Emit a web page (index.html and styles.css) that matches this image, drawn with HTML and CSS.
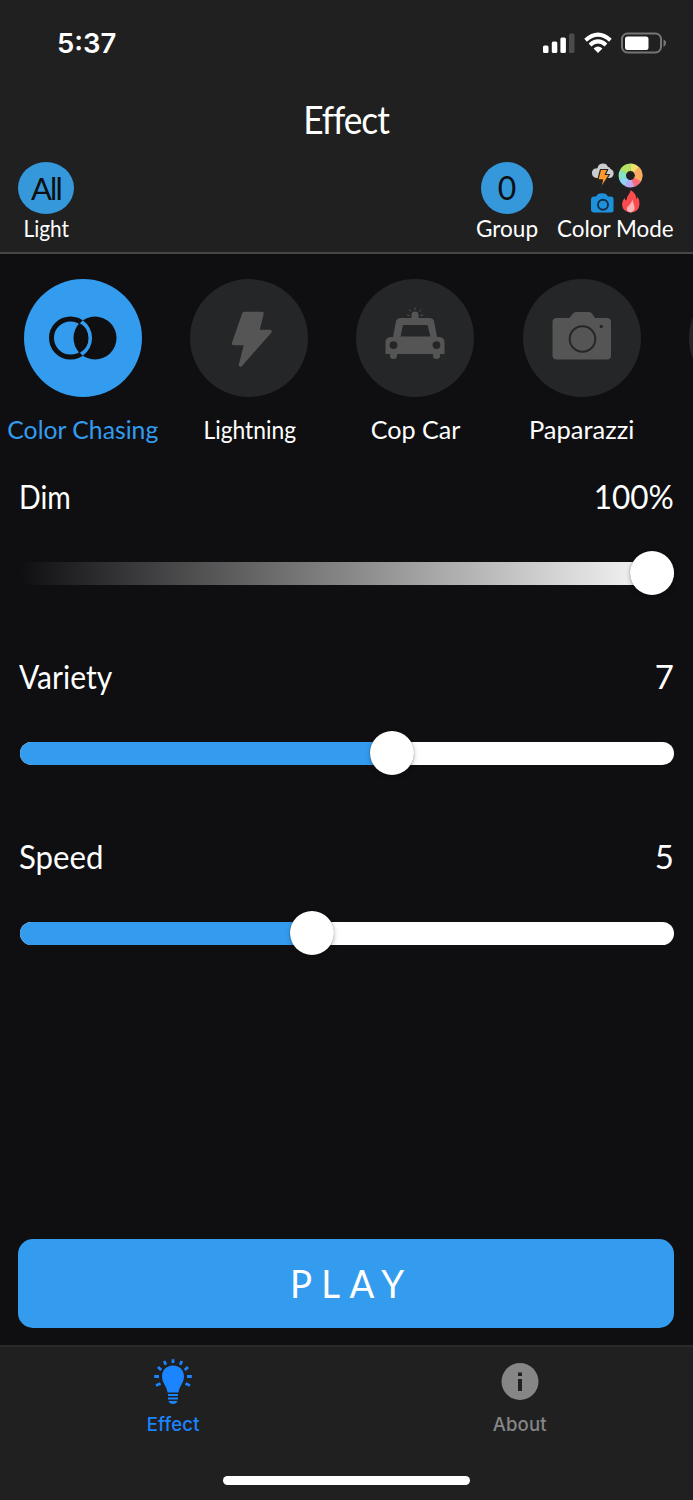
FILE: index.html
```
<!DOCTYPE html>
<html lang="en">
<head>
<meta charset="utf-8">
<title>Effect</title>
<link rel="stylesheet" href="styles.css">
</head>
<body>
<div class="app">
  <header class="header">
    <div class="status">
      <span class="time">5:37</span>
      <svg class="status-icons" width="124" height="24" viewBox="0 0 124 24">
        <g fill="#fff">
          <rect x="1" y="14.500" width="5.500" height="7.500" rx="1.500"/>
          <rect x="9.800" y="10.500" width="5.500" height="11.500" rx="1.500"/>
          <rect x="18.400" y="6.500" width="5.500" height="15.500" rx="1.500"/>
          <rect x="27" y="2.500" width="5.500" height="19.500" rx="1.500" fill="#4b4b4c"/>
          <path d="M56 22 L51.600 17.500 Q56 13.600 60.400 17.500 Z"/>
        </g>
        <g fill="none" stroke="#fff" stroke-width="4">
          <path d="M43.600 9.200 Q56 -2 68.400 9.200"/>
          <path d="M48 14 Q56 6.800 64 14"/>
        </g>
        <rect x="80" y="2.500" width="39" height="19" rx="5.500" fill="none" stroke="#757576" stroke-width="2"/>
        <rect x="83" y="5.500" width="23.500" height="13.500" rx="2.500" fill="#fff"/>
        <path d="M121.500 8.500 Q124.800 10 124 12.500 Q123.800 14.500 121.500 16 Z" fill="#757576"/>
      </svg>
    </div>
    <h1 class="title">Effect</h1>
    <div class="tools">
      <div class="tool tool-light">
        <span class="badge badge-wide">All</span>
        <span class="tool-label lb-light">Light</span>
      </div>
      <div class="tool tool-group">
        <span class="badge">0</span>
        <span class="tool-label lb-group">Group</span>
      </div>
      <div class="tool tool-mode">
        <svg class="mode-icon" width="54" height="52" viewBox="0 0 54 52">
          <path d="M6 16 A5 5 0 0 1 5 6.500 Q7 6.500 7.500 6 A5.500 5.500 0 0 1 18 5 Q20 5 20.500 7 A4.700 4.700 0 0 1 20 16 Z" fill="#cbccd0"/>
          <path d="M10.500 7.500 L17.800 7.500 L15.200 12.500 L19.500 12.500 L10.800 26 L12.500 17.800 L7.800 17.800 Z" fill="#fd9a2b" stroke="#2a2420" stroke-width="1.200" stroke-linejoin="round"/>
          <g fill="none" stroke-width="7.400">
            <circle cx="40.500" cy="13.500" r="8.200" stroke="#f5dd67" pathLength="8" stroke-dasharray="1.050 6.950"/>
            <circle cx="40.500" cy="13.500" r="8.200" stroke="#fb965f" pathLength="8" stroke-dasharray="1.050 6.950" stroke-dashoffset="1"/>
            <circle cx="40.500" cy="13.500" r="8.200" stroke="#fb6b78" pathLength="8" stroke-dasharray="1.050 6.950" stroke-dashoffset="-.6"/>
            <circle cx="40.500" cy="13.500" r="8.200" stroke="#c2a7f4" pathLength="8" stroke-dasharray="1.050 6.950" stroke-dashoffset="-1.600"/>
            <circle cx="40.500" cy="13.500" r="8.200" stroke="#8ed5f5" pathLength="8" stroke-dasharray="1.050 6.950" stroke-dashoffset="-2.600"/>
            <circle cx="40.500" cy="13.500" r="8.200" stroke="#85e4c1" pathLength="8" stroke-dasharray="1.050 6.950" stroke-dashoffset="-3.600"/>
            <circle cx="40.500" cy="13.500" r="8.200" stroke="#b3e365" pathLength="8" stroke-dasharray="1.450 6.550" stroke-dashoffset="-4.600"/>
            <circle cx="40.500" cy="13.500" r="8.200" stroke="#ece36c" pathLength="8" stroke-dasharray="1.050 6.950" stroke-dashoffset="-6"/>
            <circle cx="40.500" cy="13.500" r="8.200" stroke="#fbac61" pathLength="8" stroke-dasharray="1.600 6.400" stroke-dashoffset="-7"/>
          </g>
          <path d="M4.500 34.500 H6 L8 32 Q12 30.500 16 32 L18 34.500 H21 Q23.500 34.500 23.500 37 V48 Q23.500 50.500 21 50.500 H4 Q1 50.500 1 47.500 V37.500 Q1 34.500 4.500 34.500Z" fill="#1e91dc"/>
          <circle cx="13" cy="42.800" r="5" fill="none" stroke="#132c40" stroke-width="1.900"/>
          <path d="M40.500 28 Q46 31 46.500 37 Q47.500 36 47.500 34.500 Q50 38.500 49.500 42 Q49 50 41 50.500 Q32.500 50 32 42.500 Q32 39 34.500 36 Q35 38 36.500 38.500 Q37 34 39 32 Q40.500 30 40.500 28Z" fill="#fa4b4f"/>
          <path d="M42.500 37.500 Q43 40.500 44 43 Q46 48.500 41 50.500 Q36 50 37 45.500 Q38 44 39 43.500 Q41.500 41 42.500 37.500Z" fill="#ffb4b5"/>
        </svg>
        <span class="tool-label lb-mode">Color Mode</span>
      </div>
    </div>
  </header>

  <main class="main">
    <nav class="effects">
      <div class="effect active">
        <span class="disc"><svg width="118" height="118" viewBox="0 0 118 118">
          <circle cx="71" cy="59" r="21.500" fill="#0f0f11"/>
          <circle cx="46.500" cy="59" r="19" fill="none" stroke="#0f0f11" stroke-width="5"/>
          <path d="M58.750 41.300 A21.500 21.500 0 0 1 58.750 76.700 L55.900 73.800 A17 17 0 0 0 55.900 44.200 Z" fill="#339cef"/>
        </svg></span>
        <span class="effect-label lb-chasing">Color Chasing</span>
      </div>
      <div class="effect">
        <span class="disc"><svg width="118" height="118" viewBox="0 0 118 118">
          <path d="M54 34.500 H72 L67.500 52.500 H80 L50.500 86 L56 64.500 H43.500 Z" fill="#555" stroke="#555" stroke-width="3.500" stroke-linejoin="round"/>
        </svg></span>
        <span class="effect-label lb-lightning">Lightning</span>
      </div>
      <div class="effect">
        <span class="disc"><svg width="118" height="118" viewBox="0 0 118 118">
          <path fill="#555" fill-rule="evenodd" d="M45 39 H55.500 V35.500 Q55.500 32.500 59 32.500 Q62.500 32.500 62.500 35.500 V39 H73 Q77 39 78 42 L81 58 H84 Q88.500 59 88.500 63 V75 H84 V77 Q84 80 80.500 80 Q77 80 77 77 V75 H41 V77 Q41 80 37.500 80 Q34 80 34 77 V75 H29.500 V63 Q29.500 59 34 58 H37 L40 42 Q41 39 45 39Z M47 46 L44.500 57.500 H74.500 L71.500 46Z M37.500 62.200 a3.900 3.900 0 1 0 0 7.800 a3.900 3.900 0 1 0 0-7.800 M80.500 62.200 a3.900 3.900 0 1 0 0 7.800 a3.900 3.900 0 1 0 0-7.800"/>
          <path d="M59 31 V28.500 M55 32.500 L53 30.500 M53.500 36.500 L51 36 M63.500 32.500 L65 30.500 M64.500 36.500 L67 36" stroke="#555" stroke-width="1"/>
        </svg></span>
        <span class="effect-label lb-cop">Cop Car</span>
      </div>
      <div class="effect">
        <span class="disc"><svg width="118" height="118" viewBox="0 0 118 118">
          <path d="M34 39 H46.500 L50 34.500 Q51 33 53 33 H66 Q68 33 69 34.500 L72 39 H84 Q88 39 88 43 V76.500 Q88 80.500 84 80.500 H34 Q29.500 80.500 29.500 76.500 V43 Q29.500 39 34 39Z" fill="#555"/>
          <circle cx="59.500" cy="60" r="12.800" fill="none" stroke="#252628" stroke-width="2"/>
          <circle cx="78.300" cy="47.500" r="1.700" fill="#252628"/>
        </svg></span>
        <span class="effect-label">Paparazzi</span>
      </div>
      <div class="effect"><span class="disc"></span></div>
    </nav>

    <section class="controls">
      <div class="control">
        <div class="control-head"><span class="lb-dim">Dim</span><span class="v-dim">100%</span></div>
        <div class="slider slider-dim"><div class="track"></div><span class="thumb" style="left:632px"></span></div>
      </div>
      <div class="control">
        <div class="control-head"><span class="lb-variety">Variety</span><span>7</span></div>
        <div class="slider"><div class="track"><div class="fill" style="width:371px"></div></div><span class="thumb" style="left:371.500px"></span></div>
      </div>
      <div class="control">
        <div class="control-head"><span class="lb-speed">Speed</span><span>5</span></div>
        <div class="slider"><div class="track"><div class="fill" style="width:292px"></div></div><span class="thumb" style="left:292px"></span></div>
      </div>
    </section>

    <button class="play" type="button"><span>PLAY</span></button>
  </main>

  <footer class="tabbar">
    <div class="tabs">
      <div class="tab tab-active">
        <svg width="40" height="46" viewBox="0 0 40 46" fill="#1b84ff">
          <path d="M20 7.500 C27 7.500 31 12.500 31 18.500 C31 25 26 28.500 25.500 34.500 H14.500 C14 28.500 9 25 9 18.500 C9 12.500 13 7.500 20 7.500Z"/>
          <rect x="15" y="36" width="10" height="2"/><rect x="15" y="39.500" width="10" height="2"/>
          <path d="M15.500 43 H24.500 Q23.500 46 20 46 Q16.500 46 15.500 43Z"/>
          <path d="M20 1.200 V5 M11.200 3 L12.800 6.800 M28.800 3 L27.200 6.800 M5 9 L8.200 12 M35 9 L31.800 12 M1.200 18.500 H6 M38.800 18.500 H34 M3 27.500 L7.500 25.500 M37 27.500 L32.500 25.500" fill="none" stroke="#1b84ff" stroke-width="2.800"/>
        </svg>
        <span>Effect</span>
      </div>
      <div class="tab">
        <svg width="40" height="46" viewBox="0 0 40 46">
          <circle cx="20" cy="23.500" r="18.500" fill="#868687"/>
          <path d="M18 14.500 H22 V18 H18Z M18 21 H22 V33 H18Z" fill="#202021"/>
        </svg>
        <span>About</span>
      </div>
    </div>
    <div class="home"></div>
  </footer>
</div>
</body>
</html>
```
FILE: styles.css
```
* { box-sizing: border-box; }
body {
  margin: 0;
  background: #0f0f11;
  color: #fff;
  font-family: Lato, "Liberation Sans", sans-serif;
}
.app {
  width: 693px;
  height: 1500px;
  display: flex;
  flex-direction: column;
  overflow: hidden;
}
.header {
  height: 254px;
  background: #202021;
  border-bottom: 2px solid #464647;
}
.status {
  height: 86px;
  padding: 0 27px 0 57px;
  display: flex;
  align-items: center;
  justify-content: space-between;
}
.time { font: 600 27.500px Inter, sans-serif; }
.title {
  margin: 9px 1px 0 0;
  font-size: 39px;
  font-weight: 400;
  line-height: 48px;
  letter-spacing: -1.200px;
  text-align: center;
  transform: scaleX(.905);
}
.tools {
  margin-top: 19px;
  padding: 0 19px 0 18px;
  display: flex;
}
.tool { display: flex; flex-direction: column; align-items: center; }
.tool-light { width: 56px; }
.tool-group { width: 64px; margin-left: auto; }
.tool-mode { width: 118px; margin-left: 17px; }
.mode-icon { margin-left: 3px; }
.badge {
  width: 52px;
  height: 52px;
  border-radius: 50%;
  background: #3498db;
  color: #0f0f11;
  font-size: 32px;
  line-height: 52px;
  text-align: center;
}
.badge-wide { width: 56px; font-size: 31px; letter-spacing: -1.800px; }
.tool-label {
  margin-top: -1px;
  font-size: 24px;
  line-height: 30px;
  white-space: nowrap;
}
.lb-light { transform: scaleX(.87); }
.lb-group { transform: scaleX(.94); }
.lb-mode { transform: scaleX(.935); }
.lb-chasing { transform: scaleX(.97); }
.lb-lightning { transform: scaleX(.895); }
.lb-cop { transform: scaleX(.985); }
.lb-dim, .lb-variety, .lb-speed { margin-left: -1px; transform-origin: left; }
.lb-dim { transform: scaleX(.865); }
.lb-variety { transform: scaleX(.91); }
.lb-speed { transform: scaleX(.945); }
.v-dim { transform: scaleX(.955); transform-origin: right; }

.main { flex: 1; display: flex; flex-direction: column; }
.effects { display: flex; padding-top: 25px; height: 190px; overflow: hidden; }
.effect {
  flex: 0 0 166.200px;
  display: flex;
  flex-direction: column;
  align-items: center;
}
.disc { width: 118px; height: 118px; border-radius: 50%; background: #252628; }
.disc svg { display: block; }
.active .disc { background: #339cef; }
.effect-label { margin-top: 16px; font-size: 25.500px; line-height: 32px; white-space: nowrap; }
.active .effect-label { color: #339cef; }
.controls { padding: 32px 19px 0 20px; }
.control { height: 180px; }
.control-head {
  display: flex;
  justify-content: space-between;
  font-size: 33px;
  line-height: 40px;
}
.slider {
  position: relative;
  height: 44px;
  margin-top: 35px;
  display: flex;
  align-items: center;
}
.track { width: 100%; height: 23px; border-radius: 12px; overflow: hidden; background: #fff; }
.slider-dim .track { background: linear-gradient(90deg, #0f0f11, #fff); }
.fill { height: 100%; background: #339cef; }
.thumb {
  position: absolute;
  top: 0;
  width: 44px;
  height: 44px;
  margin-left: -22px;
  border-radius: 50%;
  background: #fff;
  box-shadow: 0 2px 5px rgba(0, 0, 0, .25), 0 0 1px rgba(0, 0, 0, .5);
}
.play {
  margin: auto 19px 17px 18px;
  height: 89px;
  padding: 0 0 0 11px;
  border: 0;
  border-radius: 15px;
  background: #339cef;
  color: #fff;
  font: 400 39px/87px Lato, sans-serif;
  letter-spacing: 10px;
}
.play span { display: inline-block; transform: scaleX(.94); }
.tabbar { height: 155px; background: #202021; border-top: 2px solid #29292a; }
.tabs { display: flex; height: 128px; padding-top: 11px; }
.tab {
  flex: 1;
  display: flex;
  flex-direction: column;
  align-items: center;
  color: #868687;
  font: 500 18.500px/24px Inter, sans-serif;
}
.tab span { margin-top: 8px; letter-spacing: .2px; }
.tab-active { color: #1b84ff; }
.home { width: 247px; height: 9px; margin: .5px auto 0; border-radius: 5px; background: #fff; }
```
